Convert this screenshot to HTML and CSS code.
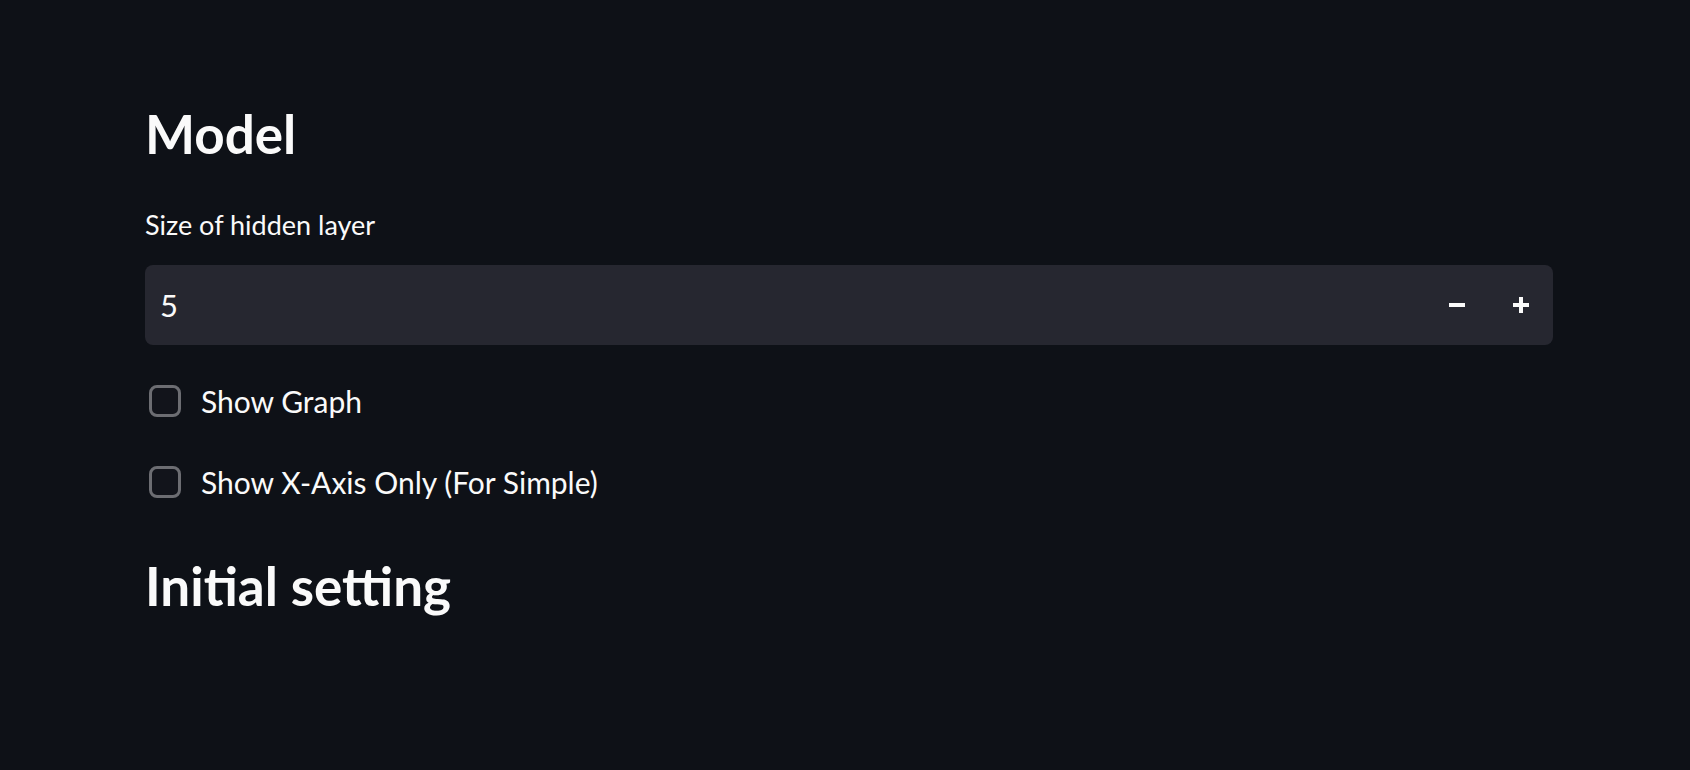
FILE: index.html
```html
<!DOCTYPE html>
<html lang="en">
<head>
<meta charset="utf-8">
<title>Model</title>
<link rel="stylesheet" href="styles.css">
</head>
<body>
<main class="block">
  <h3 class="subheader subheader-model">Model</h3>
  <label class="widget-label" for="hidden">Size of hidden layer</label>
  <div class="number-input">
    <input id="hidden" class="number-value" type="text" value="5">
    <button class="step-btn" aria-label="decrement">
      <svg width="16" height="16" viewBox="0 0 16 16"><rect x="0" y="6" width="16" height="4" fill="#fafafa"/></svg>
    </button>
    <button class="step-btn" aria-label="increment">
      <svg width="16" height="16" viewBox="0 0 16 16"><rect x="0" y="6" width="16" height="4" fill="#fafafa"/><rect x="6" y="0" width="4" height="16" fill="#fafafa"/></svg>
    </button>
  </div>
  <div class="checks">
    <label class="check-row"><span class="check-box"></span><span class="check-text">Show Graph</span></label>
    <label class="check-row"><span class="check-box"></span><span class="check-text">Show X-Axis Only (For Simple)</span></label>
  </div>
  <h3 class="subheader subheader-initial">Initial setting</h3>
</main>
</body>
</html>
```
FILE: styles.css
```css
html, body {
  margin: 0;
  padding: 0;
  background: #0e1117;
  color: #fafafa;
  font-family: "Source Sans Pro", "Lato", "Noto Sans", sans-serif;
}

.block {
  display: flex;
  flex-direction: column;
  padding: 102px 137px 0 145px;
}

.subheader {
  margin: 0;
  font-size: 53px;
  font-weight: 700;
  line-height: 1.2;
  letter-spacing: 0;
}

.widget-label {
  margin-top: 43px;
  font-size: 27px;
  line-height: 1.2;
}

.number-input {
  margin-top: 24px;
  height: 80px;
  background: #262730;
  border-radius: 8px;
  display: flex;
  align-items: center;
}

.number-value {
  flex: 1;
  background: transparent;
  border: none;
  outline: none;
  color: #fafafa;
  font-family: inherit;
  font-size: 31px;
  padding: 0 0 0 15px;
  height: 100%;
}

.step-btn {
  width: 64px;
  height: 100%;
  background: transparent;
  border: none;
  padding: 0;
  display: flex;
  align-items: center;
  justify-content: center;
}

.checks {
  margin-top: 36px;
  display: flex;
  flex-direction: column;
  gap: 41px;
}

.check-row {
  display: flex;
  align-items: center;
  height: 40px;
  padding-left: 4px;
}

.check-box {
  width: 32px;
  height: 32px;
  box-sizing: border-box;
  border: 3px solid #6c6d72;
  border-radius: 8px;
  background: #12141b;
}

.check-text {
  margin-left: 20px;
  font-size: 30px;
  line-height: 1.2;
}

.subheader-initial {
  margin-top: 52px;
}
```
